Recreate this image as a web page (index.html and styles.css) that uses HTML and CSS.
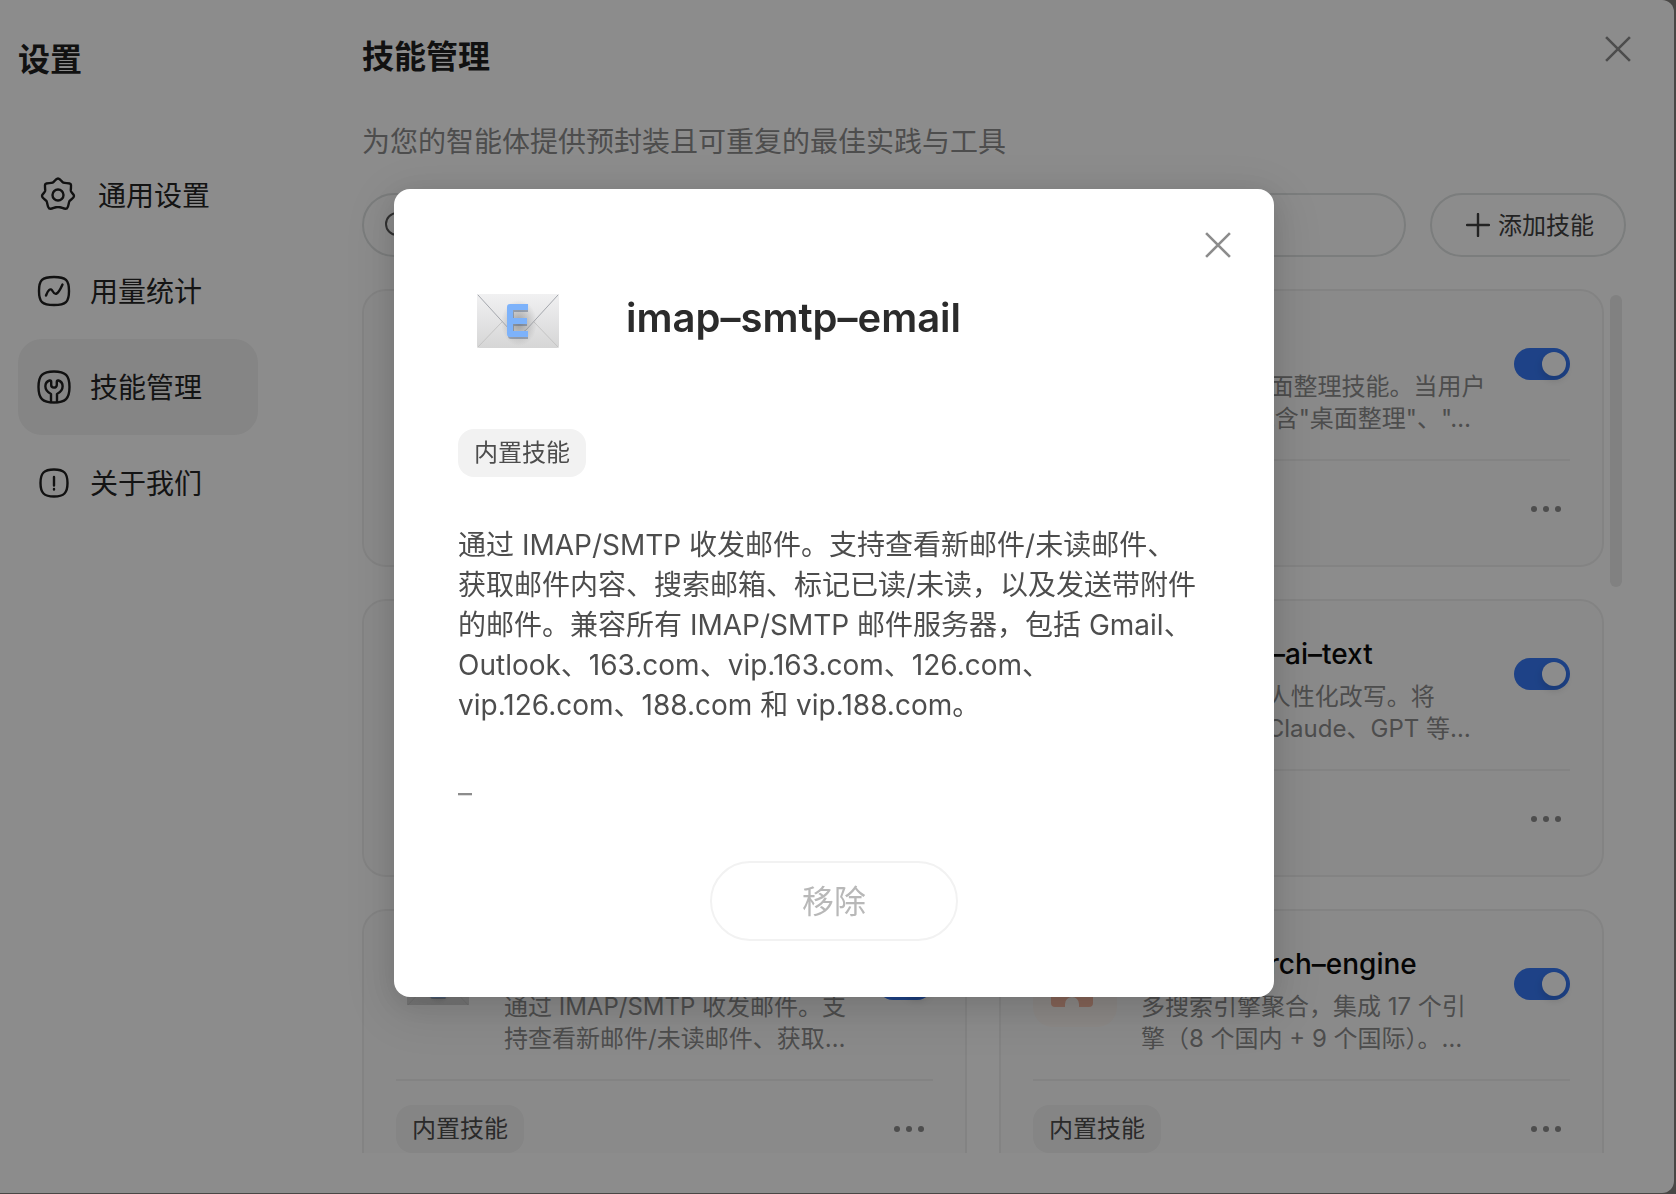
FILE: index.html
```html
<!DOCTYPE html>
<html lang="zh-CN">
<head>
    <meta charset="UTF-8">
    <meta name="viewport" content="width=device-width, initial-scale=1.0">
    <title>技能管理</title>
    <link rel="stylesheet" href="styles.css">
</head>
<body>
    <div class="window">
        <aside class="sidebar">
            <h2 class="sidebar-title">设置</h2>
            <nav class="menu">
                <a href="#general" class="menu-item menu-item-wide">
                    <svg class="menu-icon" viewBox="0 0 36 36"><path d="M18 1.500c2.400 0 3.400 3.200 5.400 4.200 2.200.9 6-.3 7.200 1.300 1.200 1.700-.2 4.700.3 7 .5 2 3.100 3 3.100 5 0 2.300-3.300 3.200-4.500 5-1.200 2-.6 6-2.600 7.400-2.200 1.200-4.900-1-6.900-1.200-1.500-.1-2.500-.1-4 0-2 .2-4.700 2.400-6.900 1.200-2-1.400-1.400-5.400-2.600-7.400-1.200-1.800-4.500-2.700-4.500-5 0-2 2.600-3 3.100-5 .5-2.300-.9-5.300.3-7 1.200-1.600 5-.4 7.200-1.300 2-1 3-4.200 5.400-4.200z"/><circle cx="18" cy="18" r="5.500"/></svg>
                    <span>通用设置</span>
                </a>
                <a href="#usage" class="menu-item">
                    <svg class="menu-icon" viewBox="0 0 36 36"><path d="M18 4c12 0 15 3 15 14s-3 14-15 14S3 29 3 18 6 4 18 4z"/><path d="M10 22.500c2-5.500 4.500-8 6.500-4.500s4.500 6 10-6.500"/></svg>
                    <span>用量统计</span>
                </a>
                <a href="#skills" class="menu-item active">
                    <svg class="menu-icon" viewBox="0 0 36 36"><path d="M18 2.500c11.500 0 15.500 4 15.500 15.500S29.500 33.500 18 33.500 2.500 29.500 2.500 18 6.500 2.500 18 2.500z"/><path d="M15 33v-8c-8-4-6.500-12-1.500-13.500 1.500-.3 1.700.5 1.700 1.500v3c0 3.500 5.600 3.500 5.600 0v-3c0-1 .2-1.800 1.700-1.500 5 1.500 6.500 9.500-1.500 13.500v8"/></svg>
                    <span>技能管理</span>
                </a>
                <a href="#about" class="menu-item">
                    <svg class="menu-icon" viewBox="0 0 36 36"><path d="M18 4.500c10 0 13.500 3.500 13.500 13.500S28 31.500 18 31.500 4.500 28 4.500 18 8 4.500 18 4.500z"/><path d="M18 12v8.500M18 24v.5"/></svg>
                    <span>关于我们</span>
                </a>
            </nav>
        </aside>

        <main class="content">
            <header class="content-header">
                <h1>技能管理</h1>
                <button class="close-button" aria-label="关闭">
                    <svg viewBox="0 0 24 24"><path d="M1 1l22 22M23 1L1 23"/></svg>
                </button>
            </header>
            <p class="subtitle">为您的智能体提供预封装且可重复的最佳实践与工具</p>

            <div class="toolbar">
                <label class="search">
                    <svg viewBox="0 0 28 28"><circle cx="13" cy="13" r="11"/><path d="M21 21l6 6"/></svg>
                    <input type="text" aria-label="搜索技能">
                </label>
                <button class="add-button">
                    <svg viewBox="0 0 24 24"><path d="M12 1v22M1 12h22"/></svg>
                    <span>添加技能</span>
                </button>
            </div>

            <div class="list">
                <div class="cards">
                    <article class="card"></article>
                    <article class="card">
                        <div class="card-top">
                            <div class="card-icon"></div>
                            <div class="card-text">
                                <h3>桌面整理</h3>
                                <p>Windows桌面整理技能。当用户<br>的请求中, 包含"桌面整理"、"…</p>
                            </div>
                            <input type="checkbox" class="toggle" aria-label="桌面整理" checked>
                        </div>
                        <div class="card-bottom">
                            <span class="tag">内置技能</span>
                            <button class="more" aria-label="更多"><i></i><i></i><i></i></button>
                        </div>
                    </article>
                    <article class="card"></article>
                    <article class="card">
                        <div class="card-top">
                            <div class="card-icon"></div>
                            <div class="card-text">
                                <h3>humanize–ai–text</h3>
                                <p>AI 生成文本人性化改写。将<br>ChatGPT、Claude、GPT 等…</p>
                            </div>
                            <input type="checkbox" class="toggle" aria-label="humanize-ai-text" checked>
                        </div>
                        <div class="card-bottom">
                            <span class="tag">内置技能</span>
                            <button class="more" aria-label="更多"><i></i><i></i><i></i></button>
                        </div>
                    </article>
                    <article class="card">
                        <div class="card-top">
                            <div class="card-icon">
                                <svg class="mail" viewBox="0 0 82 54"><use href="#envelope"/></svg>
                            </div>
                            <div class="card-text">
                                <h3>imap–smtp–email</h3>
                                <p>通过 IMAP/SMTP 收发邮件。支<br>持查看新邮件/未读邮件、获取…</p>
                            </div>
                            <input type="checkbox" class="toggle" aria-label="imap-smtp-email" checked>
                        </div>
                        <div class="card-bottom">
                            <span class="tag">内置技能</span>
                            <button class="more" aria-label="更多"><i></i><i></i><i></i></button>
                        </div>
                    </article>
                    <article class="card">
                        <div class="card-top">
                            <div class="card-icon card-icon-tint">
                                <svg viewBox="0 0 84 84"><path d="M18 30h42v30a4 4 0 0 1-4 4H46v-3a7 7 0 0 0-14 0v3H22a4 4 0 0 1-4-4z" fill="#f4b7a0"/></svg>
                            </div>
                            <div class="card-text">
                                <h3>multi–search–engine</h3>
                                <p>多搜索引擎聚合，集成 17 个引<br>擎（8 个国内 + 9 个国际）。…</p>
                            </div>
                            <input type="checkbox" class="toggle" aria-label="multi-search-engine" checked>
                        </div>
                        <div class="card-bottom">
                            <span class="tag">内置技能</span>
                            <button class="more" aria-label="更多"><i></i><i></i><i></i></button>
                        </div>
                    </article>
                </div>
                <div class="scrollbar"></div>
            </div>
        </main>
    </div>

    <div class="overlay">
        <section class="modal" role="dialog" aria-modal="true" aria-labelledby="skill-name">
            <button class="close-button modal-close" aria-label="关闭">
                <svg viewBox="0 0 24 24"><path d="M1 1l22 22M23 1L1 23"/></svg>
            </button>
            <div class="modal-head">
                <div class="modal-icon">
                    <svg class="mail" viewBox="0 0 82 54">
                        <defs>
                            <linearGradient id="paper" x1="0" y1="0" x2="0" y2="1">
                                <stop offset="0" stop-color="#f1f1f2"/>
                                <stop offset="1" stop-color="#d6d6d6"/>
                            </linearGradient>
                            <radialGradient id="shade">
                                <stop offset="0" stop-color="#808080" stop-opacity=".7"/>
                                <stop offset="1" stop-color="#909090" stop-opacity="0"/>
                            </radialGradient>
                        </defs>
                        <g id="envelope">
                            <rect width="82" height="54" rx="2" fill="url(#paper)"/>
                            <path d="M1 53l24-25M81 53L57 28" stroke="#c4c4c4" fill="none"/>
                            <path d="M1 1l32 35q8 7 16 0L81 1" stroke="#a4a7ad" fill="none"/>
                            <ellipse cx="42" cy="29" rx="18" ry="23" fill="url(#shade)"/>
                            <path d="M51 15H34v27h17M34 29h16" stroke="#5a6b85" stroke-width="6" stroke-linecap="butt" fill="none" opacity=".5"/>
                            <path d="M51 13H33v27h18M33 27h17" stroke="#7db2fa" stroke-width="6" stroke-linecap="butt" fill="none"/>
                        </g>
                    </svg>
                </div>
                <h2 id="skill-name">imap–smtp–email</h2>
            </div>
            <span class="tag">内置技能</span>
            <p class="modal-desc">通过 IMAP/SMTP 收发邮件。支持查看新邮件/未读邮件、获取邮件内容、搜索邮箱、标记已读/未读，以及发送带附件的邮件。兼容所有 IMAP/SMTP 邮件服务器，包括 Gmail、Outlook、163.com、vip.163.com、126.com、vip.126.com、188.com 和 vip.188.com。</p>
            <p class="modal-meta">–</p>
            <button class="remove-button" disabled>移除</button>
        </section>
    </div>
</body>
</html>
```

FILE: styles.css
```css
* {
    box-sizing: border-box;
}
body {
    margin: 0;
    height: 100vh;
    overflow: hidden;
    background-color: #85817f;
    font-family: Inter, "Noto Sans CJK SC", sans-serif;
    color: #1f1f1f;
}
h1, h2, h3, p {
    margin: 0;
    font-weight: 500;
}
p {
    font-weight: 400;
}
button {
    font-family: inherit;
    cursor: pointer;
}
svg {
    fill: none;
    stroke-linecap: round;
    stroke-linejoin: round;
}
.window {
    display: flex;
    height: calc(100vh - 1px);
    margin-right: 2px;
    background-color: white;
    border-radius: 0 12px 12px 0;
    overflow: hidden;
}

/* sidebar */
.sidebar {
    width: 362px;
    padding: 36px 0 0 18px;
}
.sidebar-title {
    margin-bottom: 63px;
    font-size: 32px;
    font-weight: 600;
    line-height: 48px;
}
.menu-item {
    display: flex;
    align-items: center;
    gap: 18px;
    width: 240px;
    height: 96px;
    padding-left: 18px;
    border-radius: 24px;
    color: #262626;
    font-size: 28px;
    text-decoration: none;
}
.menu-item-wide {
    gap: 22px;
    padding-left: 22px;
}
.menu-item.active {
    background-color: #f2f2f2;
}
.menu-item span {
    padding-bottom: 2px;
}
.menu-icon {
    width: 36px;
    height: 36px;
    stroke: #1f1f1f;
    stroke-width: 2.4;
}

/* content */
.content {
    flex: 1;
    display: flex;
    flex-direction: column;
    min-width: 0;
    padding: 33px 48px 40px 0;
}
.content-header {
    display: flex;
    justify-content: space-between;
    align-items: flex-start;
    height: 48px;
}
.content-header h1 {
    font-size: 32px;
    font-weight: 600;
    line-height: 48px;
}
.close-button {
    width: 26px;
    height: 26px;
    margin: 3px -5px 0 0;
    padding: 0;
    border: none;
    background: none;
}
.close-button svg {
    display: block;
    stroke: #8c8c8c;
    stroke-width: 2.4;
    stroke-linecap: butt;
}
.subtitle {
    margin-top: 40px;
    color: #8c8c8c;
    font-size: 28px;
    line-height: 42px;
}
.toolbar {
    display: flex;
    gap: 24px;
    margin-top: 30px;
}
.search, .add-button {
    display: flex;
    align-items: center;
    height: 64px;
    border: 2px solid #e0e3e3;
    border-radius: 32px;
}
.search {
    flex: 1;
    padding: 0 20px;
}
.search svg {
    width: 28px;
    height: 28px;
    stroke: #595959;
    stroke-width: 2;
}
.search input {
    flex: 1;
    border: none;
    background: none;
    font-size: 24px;
}
.add-button {
    gap: 8px;
    width: 196px;
    justify-content: center;
    padding: 0 0 0 4px;
    background: none;
    color: #404040;
    font-size: 24px;
}
.add-button span {
    padding-bottom: 4px;
}
.add-button svg {
    width: 24px;
    height: 24px;
    stroke: #404040;
    stroke-width: 2.4;
}
.list {
    flex: 1;
    display: flex;
    gap: 6px;
    min-height: 0;
    margin-top: 32px;
    margin-right: 4px;
    overflow: hidden;
}
.cards {
    flex: 1;
    display: grid;
    grid-template-columns: 1fr 1fr;
    grid-auto-rows: 278px;
    gap: 32px;
}
.card {
    padding: 32px;
    border: 2px solid #efefef;
    border-radius: 24px;
    background-color: #fcfcfc;
}
.card-top {
    display: flex;
    align-items: flex-start;
    height: 138px;
    border-bottom: 2px solid #efefef;
}
.card-icon {
    display: flex;
    align-items: center;
    justify-content: center;
    width: 84px;
    height: 84px;
    margin-right: 24px;
    border-radius: 20px;
}
.card-icon-tint {
    background-color: #fdf7f3;
}
.card-icon .mail {
    width: 62px;
}
.card-text {
    flex: 1;
}
.card-text h3 {
    margin-bottom: 6px;
    color: #0a0a0a;
    font-size: 28px;
    line-height: 42px;
}
.card-text p {
    color: #8c8c8c;
    font-size: 24px;
    line-height: 32px;
    white-space: nowrap;
}
.toggle {
    appearance: none;
    width: 56px;
    height: 32px;
    margin: 25px 0 0;
    border-radius: 16px;
    background-color: #3779f6;
    cursor: pointer;
}
.toggle::before {
    content: "";
    display: block;
    width: 24px;
    height: 24px;
    margin: 4px 4px 0 28px;
    border-radius: 50%;
    background-color: white;
    box-shadow: 0 4px 8px rgba(0, 0, 0, .15);
}
.card-bottom {
    display: flex;
    align-items: center;
    justify-content: space-between;
    height: 48px;
    margin-top: 24px;
}
.tag {
    display: inline-block;
    height: 48px;
    padding: 0 16px;
    border-radius: 16px;
    background-color: #f2f2f2;
    color: #4d4d4d;
    font-size: 24px;
    line-height: 48px;
}
.more {
    display: flex;
    gap: 6px;
    padding: 9px;
    border: none;
    background: none;
}
.more i {
    width: 6px;
    height: 6px;
    border-radius: 50%;
    background-color: #8c8c8c;
}
.scrollbar {
    width: 12px;
    height: 292px;
    margin-top: 6px;
    border-radius: 6px;
    background-color: #ebebeb;
}

/* modal */
.overlay {
    position: fixed;
    inset: 0;
    display: flex;
    align-items: center;
    justify-content: center;
    padding-right: 8px;
    padding-bottom: 8px;
    background-color: rgba(0, 0, 0, .45);
}
.modal {
    position: relative;
    width: 880px;
    padding: 72px 64px 56px;
    border-radius: 16px;
    background-color: white;
    box-shadow: 0 12px 48px 16px rgba(0, 0, 0, .08), 0 6px 28px rgba(0, 0, 0, .12);
}
.modal-close {
    position: absolute;
    top: 43px;
    right: 43px;
    margin: 0;
}
.modal-head {
    display: flex;
    align-items: center;
    gap: 48px;
    margin-bottom: 48px;
}
.modal-icon {
    display: flex;
    align-items: center;
    justify-content: center;
    width: 120px;
    height: 120px;
}
.modal-icon .mail {
    width: 82px;
}
.modal-head h2 {
    padding-bottom: 6px;
    color: #2b2b2b;
    font-size: 40px;
    font-weight: 600;
    line-height: 48px;
}
.modal .tag {
    display: block;
    width: fit-content;
}
.modal-desc {
    margin-top: 48px;
    padding-right: 10px;
    color: #4d4d4d;
    font-size: 28px;
    line-height: 40px;
}
.modal-meta {
    margin: 48px 0;
    color: #8c8c8c;
    font-size: 28px;
    line-height: 40px;
}
.remove-button {
    display: block;
    width: 248px;
    height: 80px;
    margin: 0 auto;
    padding: 0 0 4px;
    border: 2px solid #f2f2f2;
    border-radius: 40px;
    background-color: white;
    color: #b8b8b8;
    font-size: 32px;
}
```
